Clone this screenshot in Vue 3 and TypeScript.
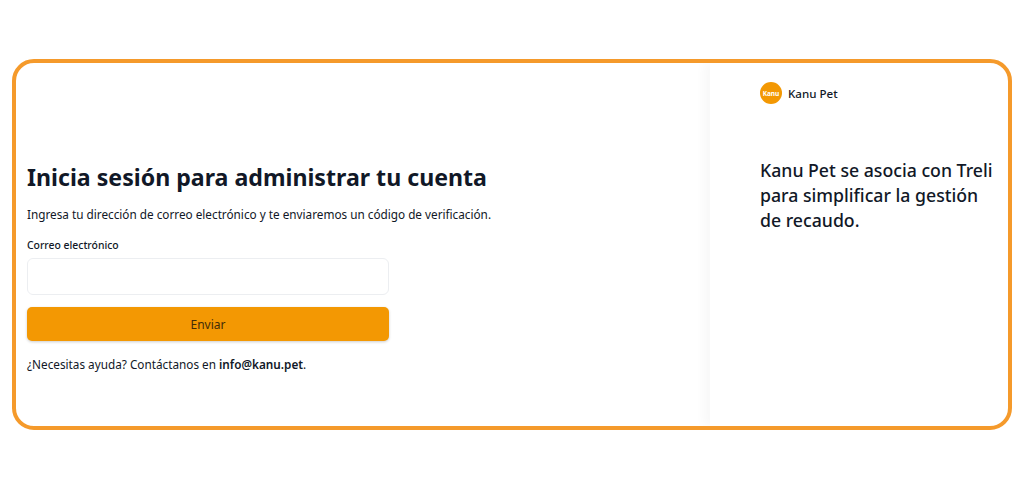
<script setup lang="ts">
const email = ''
</script>

<template>
  <div class="page">
    <div class="frame">
      <main class="left">
        <h1 class="title">Inicia sesión para administrar tu cuenta</h1>
        <p class="lead">Ingresa tu dirección de correo electrónico y te enviaremos un código de verificación.</p>
        <form class="form" @submit.prevent>
          <label class="label" for="email">Correo electrónico</label>
          <input id="email" class="input" type="email" :value="email" />
          <button class="submit" type="submit">Enviar</button>
        </form>
        <p class="help">¿Necesitas ayuda? Contáctanos en <strong>info@kanu.pet</strong>.</p>
      </main>
      <aside class="right">
        <div class="brand">
          <span class="logo">Kanu</span>
          <span class="brand-name">Kanu Pet</span>
        </div>
        <p class="pitch">Kanu Pet se asocia con Treli para simplificar la gestión de recaudo.</p>
      </aside>
    </div>
  </div>
</template>

<style scoped>
.page {
  box-sizing: border-box;
  height: 500px;
  padding: 59px 12px 70px;
  background: #fff;
  font-family: "Noto Sans", "Open Sans", sans-serif;
  color: #111827;
}
.frame {
  box-sizing: border-box;
  height: 371px;
  display: flex;
  border: 4px solid #f59a2b;
  border-radius: 22px;
  overflow: hidden;
  background: #fff;
}
.left {
  width: 694px;
  flex: none;
  box-sizing: border-box;
  padding: 45px 11px 0;
  display: flex;
  flex-direction: column;
  justify-content: center;
}
.title {
  margin: 0;
  font-size: 23.15px;
  line-height: 32px;
  font-weight: 700;
}
.lead {
  margin: 11px 0 0;
  font-size: 11.75px;
  line-height: 20px;
}
.form {
  width: 362px;
  margin-top: 13px;
  display: flex;
  flex-direction: column;
}
.label {
  font-size: 10.4px;
  line-height: 16px;
  font-weight: 500;
}
.input {
  box-sizing: border-box;
  height: 37px;
  margin-top: 5px;
  border: 1px solid #eceef1;
  border-radius: 6px;
  background: #fff;
}
.submit {
  height: 34px;
  margin-top: 12px;
  padding: 2px 0 0;
  border: 0;
  border-radius: 5px;
  background: #f39803;
  color: #432c08;
  font-family: inherit;
  font-size: 12px;
  box-shadow: 0 1px 3px rgba(0, 0, 0, 0.2);
}
.help {
  margin: 13px 0 0;
  font-size: 11.75px;
  line-height: 20px;
}
.help strong {
  font-weight: 600;
}
.right {
  flex: 1;
  padding: 19px 10px 0 50px;
  box-shadow: -6px 0 10px rgba(0, 0, 0, 0.03);
}
.brand {
  display: flex;
  align-items: center;
  gap: 6px;
}
.logo {
  width: 22px;
  height: 22px;
  border-radius: 50%;
  background: #f39803;
  color: #fff;
  font-size: 6.5px;
  font-weight: 700;
  display: flex;
  align-items: center;
  justify-content: center;
}
.brand-name {
  font-size: 11.6px;
  font-weight: 500;
}
.pitch {
  margin: 54px 0 0;
  font-size: 17.7px;
  line-height: 25px;
  font-weight: 500;
}
</style>
